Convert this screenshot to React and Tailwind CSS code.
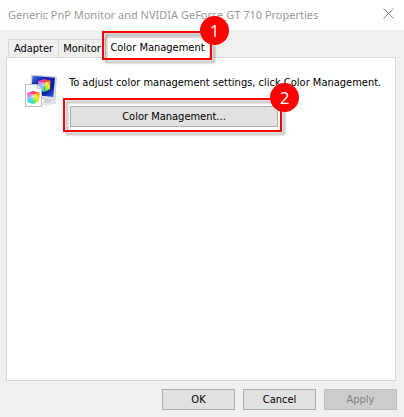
import { useState } from 'react';

const buttonBase = 'h-[21px] border border-[#adadad] bg-[#e1e1e1] leading-4 text-black';

function Highlight({ number, className }) {
  return (
    <div className={`pointer-events-none absolute ${className}`}>
      <div className="h-full w-full border-2 border-[#ff0000] drop-shadow-[3px_3px_1px_rgba(0,0,0,0.3)]" />
      <span className="absolute -top-[15px] -right-[17px] flex size-[29px] items-center justify-center rounded-full bg-[#ff0000] font-['Open_Sans',sans-serif] text-[17px] leading-none text-white">
        {number}
      </span>
    </div>
  );
}

function ColorIcon() {
  return (
    <svg width="32" height="32" viewBox="0 0 32 32" className="shrink-0" aria-hidden="true">
      <defs>
        <linearGradient id="screen" x1="0" y1="0" x2="1" y2="1">
          <stop offset="0" stopColor="#5b86e6" />
          <stop offset="0.3" stopColor="#0c26b8" />
          <stop offset="0.7" stopColor="#0a1fa8" />
          <stop offset="1" stopColor="#3c74ea" />
        </linearGradient>
        <linearGradient id="left" x1="0" y1="0" x2="0" y2="1">
          <stop offset="0" stopColor="#ff4fc0" />
          <stop offset="0.4" stopColor="#a9b4ff" />
          <stop offset="0.7" stopColor="#2fe0f5" />
          <stop offset="1" stopColor="#1fe48e" />
        </linearGradient>
        <linearGradient id="right" x1="1" y1="0" x2="0" y2="1">
          <stop offset="0" stopColor="#ff5a1e" />
          <stop offset="0.4" stopColor="#ffe91c" />
          <stop offset="0.7" stopColor="#9cec30" />
          <stop offset="1" stopColor="#12d84c" />
        </linearGradient>
        <linearGradient id="top" x1="0" y1="0" x2="1" y2="0">
          <stop offset="0" stopColor="#f74ae0" />
          <stop offset="0.5" stopColor="#ff3d5c" />
          <stop offset="1" stopColor="#ff5a1e" />
        </linearGradient>
        <radialGradient id="shine">
          <stop offset="0" stopColor="#ffffff" stopOpacity="0.6" />
          <stop offset="1" stopColor="#ffffff" stopOpacity="0" />
        </radialGradient>
        <g id="cube">
          <path d="M0 2 L6.500 3.500 L6.500 13 L0.500 11 Z" fill="url(#left)" />
          <path d="M6.500 3.500 L12.500 1.500 L12 10 L6.500 13 Z" fill="url(#right)" />
          <path d="M0 2 L6 0 L12.500 1.500 L6.500 3.500 Z" fill="url(#top)" />
          <circle cx="6" cy="5.500" r="3" fill="url(#shine)" />
        </g>
      </defs>
      {/* monitor */}
      <path d="M6.500 0 L31.500 2 L30 25.500 L5 22.500 Z" fill="#dfe3e7" stroke="#b4bac0" strokeWidth="0.600" />
      <path d="M7.500 0.800 L30 2.800 L28.300 22 L6 19.500 Z" fill="url(#screen)" />
      <path d="M20 24 L26 25 L26.500 27 L31 26.500 L30.500 28.500 L23 30.500 L17 30 Z" fill="#cdd1d5" />
      <path d="M17 28.500 L26 27 L30 28 L23 30.500 L17 30 Z" fill="#e6e9eb" />
      <use href="#cube" x="13" y="4" />
      {/* profile page */}
      <path d="M0.500 9.500 L12 9.500 L16.500 13.500 L16.500 31.500 L0.500 31.500 Z" fill="#fdfdfd" stroke="#bdbdbd" />
      <path d="M12 9.500 L12 13.500 L16.500 13.500 Z" fill="#e6e6e6" stroke="#bdbdbd" strokeWidth="0.700" />
      <use href="#cube" x="2" y="16" />
    </svg>
  );
}

export default function App() {
  const [tab, setTab] = useState('color');

  return (
    <div className="flex min-h-screen flex-col bg-[#f0f0f0] font-['DejaVu_Sans_Condensed','DejaVu_Sans',sans-serif] text-[11px] leading-4 text-black">
      <header className="flex h-[30px] items-center justify-between bg-white pr-[10px] pl-2">
        <h1 className="font-['Noto_Sans',sans-serif] text-[11px] whitespace-nowrap text-[#999999]">
          Generic PnP Monitor and NVIDIA GeForce GT 710 Properties
        </h1>
        <button type="button" aria-label="Close" className="-mt-1">
          <svg width="11" height="11" viewBox="0 0 11 11" fill="none" stroke="#8a8a8a">
            <path d="M0.500 0.500 L10.500 10.500 M10.500 0.500 L0.500 10.500" />
          </svg>
        </button>
      </header>

      <div role="tablist" className="flex h-[27px] items-end pl-2">
        <button
          type="button"
          role="tab"
          aria-selected={tab === 'adapter'}
          onClick={() => setTab('adapter')}
          className="h-[18px] w-[51px] border border-b-0 border-[#d9d9d9] leading-4"
        >
          Adapter
        </button>
        <button
          type="button"
          role="tab"
          aria-selected={tab === 'monitor'}
          onClick={() => setTab('monitor')}
          className="h-[18px] w-[46px] border-t border-[#d9d9d9] leading-4"
        >
          Monitor
        </button>
        <div className="relative z-10 -mb-px">
          <button
            type="button"
            role="tab"
            aria-selected={tab === 'color'}
            onClick={() => setTab('color')}
            className="block h-[21px] w-[105px] border border-b-0 border-[#d9d9d9] bg-white leading-4"
          >
            Color Management
          </button>
          <Highlight number="1" className="-top-[6px] -right-[2px] -bottom-[2px] -left-[3px]" />
        </div>
      </div>

      <main className="mr-2 ml-[6px] flex-1 border border-[#d9d9d9] bg-white">
        <div className="flex gap-3 pt-[17px] pl-[18px]">
          <ColorIcon />
          <div className="min-w-0 flex-1">
            <p className="whitespace-nowrap">To adjust color management settings, click Color Management.</p>
            <div className="relative mt-[15px] ml-px w-[208px]">
              <button type="button" className={`${buttonBase} w-full`}>
                Color Management...
              </button>
              <Highlight number="2" className="-top-[8px] -right-[4px] -bottom-[5px] -left-[7px]" />
            </div>
          </div>
        </div>
      </main>

      <footer className="flex justify-end gap-2 pt-2 pr-[7px] pb-[7px]">
        <button type="button" className={`${buttonBase} w-[73px]`}>OK</button>
        <button type="button" className={`${buttonBase} w-[73px]`}>Cancel</button>
        <button
          type="button"
          disabled
          className="h-[21px] w-[73px] border border-[#bfbfbf] bg-[#cccccc] leading-4 text-[#838383]"
        >
          Apply
        </button>
      </footer>
    </div>
  );
}
